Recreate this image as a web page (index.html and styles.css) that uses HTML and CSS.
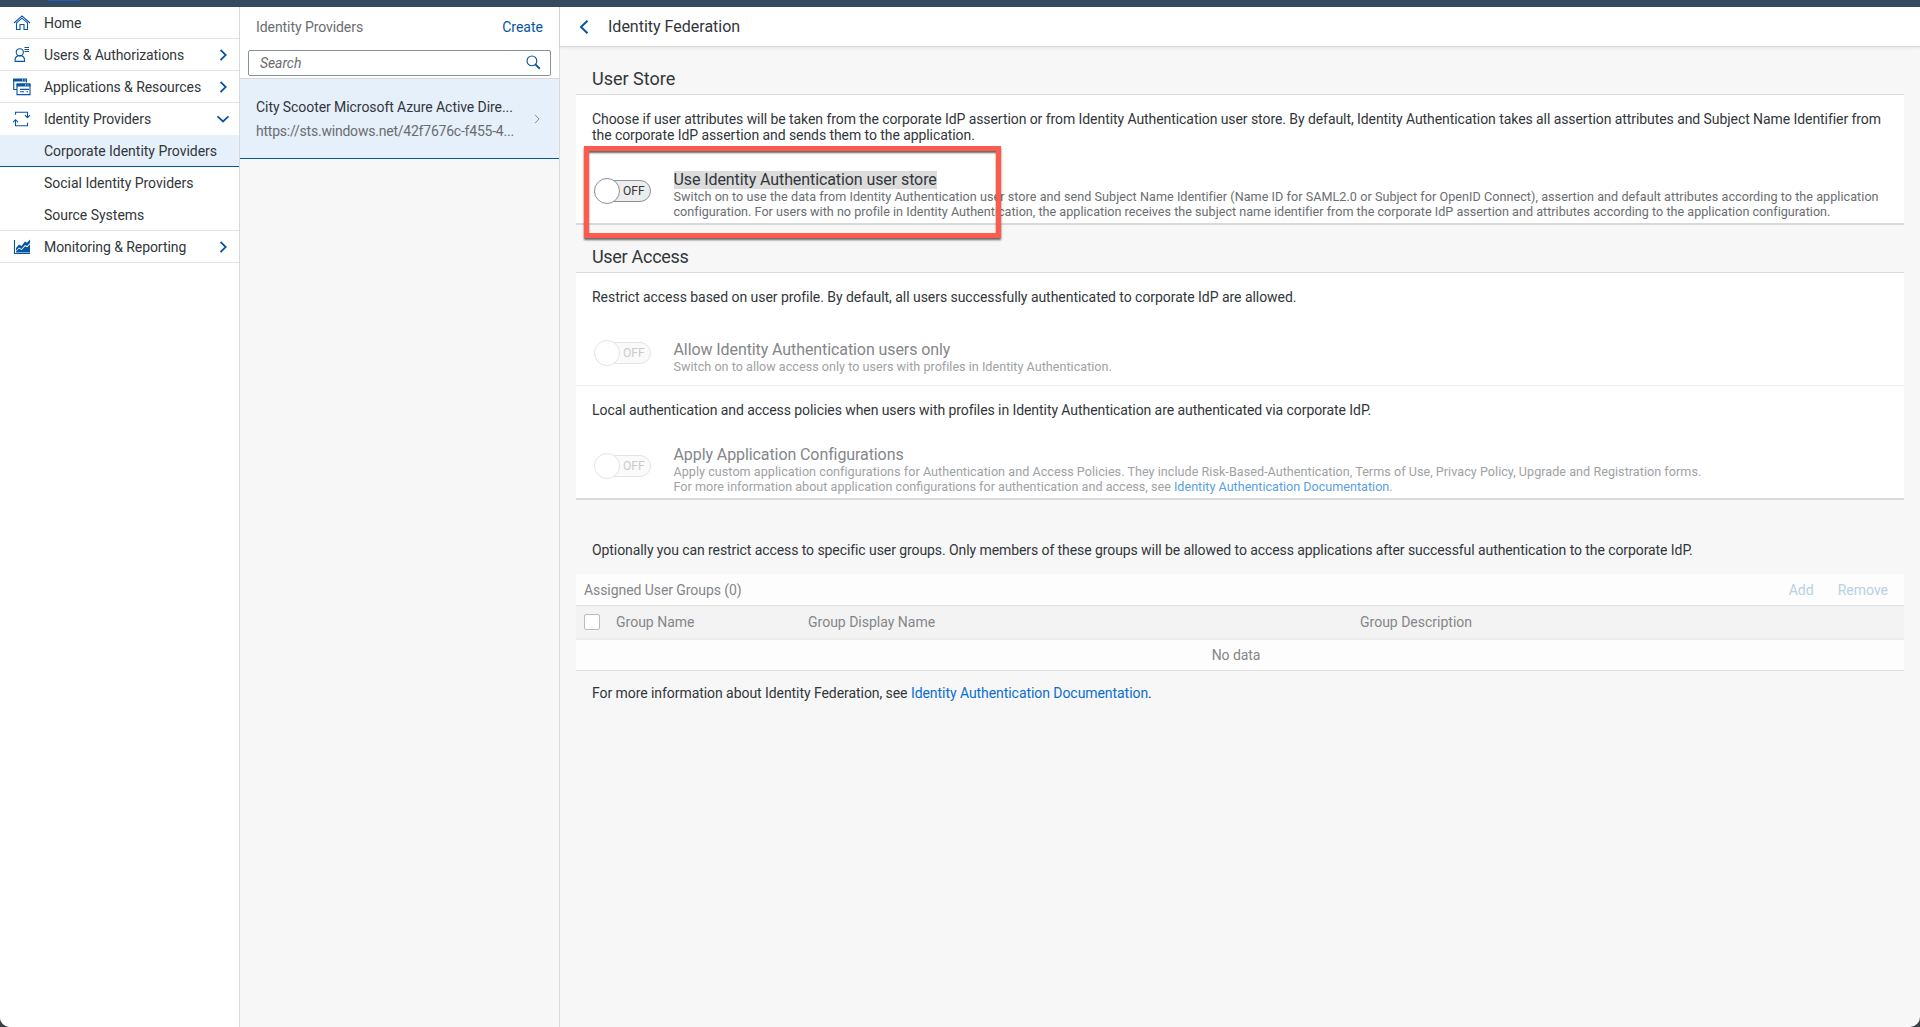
FILE: index.html
```html
<!DOCTYPE html>
<html lang="en">
<head>
<meta charset="utf-8">
<title>Identity Federation</title>
<link rel="stylesheet" href="styles.css">
</head>
<body>
<div class="window">
  <div class="shell"><span class="shell-tab"></span></div>
  <div class="columns">
    <nav class="side">
      <a class="nav-item"><svg class="ico" viewBox="0 0 18 18"><path d="M1 9 9 1.9 17 9M3.5 8.9V15.5H7V10.5H11V15.5H14.5V8.9L9 4.2z"/></svg><span>Home</span></a>
      <a class="nav-item"><svg class="ico" viewBox="0 0 18 18"><circle cx="6.8" cy="6.3" r="3.6"/><path d="M2.1 15.4V13.8Q2.1 11 5 9.8H8.8Q11.5 11 11.5 13.8V15.4zM11.5 1.5H16M11.5 3.5H16M11.5 5.5H16"/></svg><span class="w-users">Users &amp; Authorizations</span><svg class="chev" viewBox="0 0 12 12"><path d="M3.5 .8 8.7 6 3.5 11.2"/></svg></a>
      <a class="nav-item"><svg class="ico" viewBox="0 0 18 18"><path d="M3.5 11.5H.7V1.5H13.5V4.5M4 5.9V16.6H17V5.9M7 11.4H16M7 13.8H11M13.5 13.8H15"/><path class="fill" d="M.2.6H14V3.6H.2zM3.6 5.3H17.4V8.6H3.6z"/><path class="dots" d="M9 2H10M11.5 2H12.5M12 7H13M14.5 7H15.5"/></svg><span>Applications &amp; Resources</span><svg class="chev" viewBox="0 0 12 12"><path d="M3.5 .8 8.7 6 3.5 11.2"/></svg></a>
      <a class="nav-item open"><svg class="ico" viewBox="0 0 18 18"><path d="M2.5 4.7V2.2H14.5V7.5M12 5.2 14.5 7.7 17 5.2M2.5 10V15.7H14.5V12.7M0 12.2 2.5 9.7 5 12.2"/></svg><span>Identity Providers</span><svg class="chev" viewBox="0 0 12 12"><path d="M.5 3.3 6 8.5 11.5 3.3"/></svg></a>
      <a class="nav-item sub selected"><span>Corporate Identity Providers</span></a>
      <a class="nav-item sub"><span>Social Identity Providers</span></a>
      <a class="nav-item sub last"><span>Source Systems</span></a>
      <a class="nav-item"><svg class="ico" viewBox="0 0 18 18"><path d="M1.5 2V15.5H17"/><path class="fill" d="M3 10 6 6.5 8.5 8 12 3.5 14 4.8 17 1.5V5L14 8 12 7 8.5 11 6 9.5 3 12.7zM3 14.6V13.5L6 10.6 8.6 12 12.2 8.2 14.2 9.2 17 6.2V14.6z"/></svg><span>Monitoring &amp; Reporting</span><svg class="chev" viewBox="0 0 12 12"><path d="M3.5 .8 8.7 6 3.5 11.2"/></svg></a>
    </nav>

    <section class="list">
      <header class="list-head">
        <div class="list-title"><span>Identity Providers</span><a>Create</a></div>
        <div class="search"><span>Search</span><svg viewBox="0 0 16 16"><circle cx="6.3" cy="6.3" r="5.2"/><path d="M10 10 14.7 14.7"/></svg></div>
      </header>
      <div class="list-item">
        <div class="list-text"><span class="provider">City Scooter Microsoft Azure Active Dire...</span><span class="url">https://sts.windows.net/42f7676c-f455-4...</span></div>
        <svg viewBox="0 0 8 10"><path d="M2 .8 6 5 2 9.2"/></svg>
      </div>
    </section>

    <main class="detail">
      <header class="detail-head"><svg viewBox="0 0 10 14"><path d="M8.5 .8 2 7 8.5 13.2"/></svg><h1>Identity Federation</h1></header>
      <div class="content">
        <h2>User Store</h2>
        <div class="card store">
          <p class="intro">Choose if user attributes will be taken from the corporate IdP assertion or from Identity Authentication user store. By default, Identity Authentication takes all assertion attributes and Subject Name Identifier from<br>the corporate IdP assertion and sends them to the application.</p>
          <div class="option">
            <div class="switch"><span class="track">OFF</span><span class="knob"></span></div>
            <div class="option-text">
              <h3><mark>Use Identity Authentication user store</mark></h3>
              <p>Switch on to use the data from Identity Authentication user store and send Subject Name Identifier (Name ID for SAML2.0 or Subject for OpenID Connect), assertion and default attributes according to the application<br><span class="tight">configuration. For users with no profile in Identity Authentication, the application receives the subject name identifier from the corporate IdP assertion and attributes according to the application configuration.</span></p>
            </div>
          </div>
          <div class="highlight"></div>
        </div>

        <h2>User Access</h2>
        <div class="card access">
          <div class="block restrict">
            <p class="intro">Restrict access based on user profile. By default, all users successfully authenticated to corporate IdP are allowed.</p>
            <div class="option disabled">
              <div class="switch"><span class="track">OFF</span><span class="knob"></span></div>
              <div class="option-text"><h3>Allow Identity Authentication users only</h3><p class="tight">Switch on to allow access only to users with profiles in Identity Authentication.</p></div>
            </div>
          </div>
          <div class="block local">
            <p class="intro">Local authentication and access policies when users with profiles in Identity Authentication are authenticated via corporate IdP.</p>
            <div class="option disabled">
              <div class="switch"><span class="track">OFF</span><span class="knob"></span></div>
              <div class="option-text"><h3>Apply Application Configurations</h3><p>Apply custom application configurations for Authentication and Access Policies. They include Risk-Based-Authentication, Terms of Use, Privacy Policy, Upgrade and Registration forms.<br><span class="tight">For more information about application configurations for authentication and access, see <a>Identity Authentication Documentation</a>.</span></p></div>
            </div>
          </div>
        </div>

        <p class="note groups-note">Optionally you can restrict access to specific user groups. Only members of these groups will be allowed to access applications after successful authentication to the corporate IdP.</p>
        <div class="table">
          <div class="toolbar"><span>Assigned User Groups (0)</span><a>Add</a><a>Remove</a></div>
          <div class="thead"><span class="check"></span><span>Group Name</span><span>Group Display Name</span><span>Group Description</span></div>
          <div class="empty">No data</div>
        </div>
        <p class="note more">For more information about Identity Federation, see <a>Identity Authentication Documentation</a>.</p>
      </div>
    </main>
  </div>
</div>
</body>
</html>
```
FILE: styles.css
```css
* { box-sizing: border-box; }
body { margin: 0; background: #3c4045; font: 14px/16px Roboto, "Liberation Sans", sans-serif; color: #32363a; letter-spacing: -0.07px; }
h1, h2, h3, p { margin: 0; font-weight: 400; }
svg { fill: none; stroke: #0854a0; flex: none; }

.window { height: 1027px; display: flex; flex-direction: column; overflow: hidden; border-radius: 0 0 10px 10px; background: #f7f7f7; }
.shell { height: 7px; flex: none; background: #354a5f; padding-left: 48px; }
.shell-tab { display: block; width: 32px; height: 1px; background: #1b5fc1; }
.columns { flex: 1; display: flex; min-height: 0; }

.side { width: 240px; flex: none; background: #fff; border-right: 1px solid #d9d9d9; }
.nav-item { display: flex; align-items: center; height: 32px; padding: 1px 10px 0 13px; border-bottom: 1px solid #e4e4e4; white-space: nowrap; }
.nav-item span { flex: 1; margin-left: 13px; }
.nav-item .w-users { letter-spacing: -0.09px; }
.ico { width: 18px; height: 18px; stroke-width: 1.1; }
.ico .fill { fill: #0854a0; stroke: none; }
.ico .dots { stroke: #fff; }
.chev { width: 12px; height: 12px; stroke-width: 1.8; }
.nav-item.open, .nav-item.sub { border-bottom-color: transparent; }
.nav-item.sub { padding-left: 31px; letter-spacing: -0.02px; }
.nav-item.selected { background: #e5f0fa; border-bottom-color: #0854a0; }
.nav-item.last { border-bottom-color: #e4e4e4; }

.list { width: 320px; flex: none; border-right: 1px solid #d9d9d9; }
.list-head { height: 72px; background: #fff; border-bottom: 1px solid #d9d9d9; padding: 0 8px; }
.list-title { height: 43px; display: flex; justify-content: space-between; align-items: center; padding: 0 8px; color: #6a6d70; }
.list-title span { padding-bottom: 4px; }
.list-title a { color: #0854a0; padding-bottom: 4px; letter-spacing: 0; }
.search { height: 26px; width: 303px; border: 1px solid #89919a; border-radius: 2px; display: flex; align-items: center; justify-content: space-between; padding: 0 9px 0 11px; font-style: italic; color: #6a6d70; }
.search svg { width: 15px; height: 15px; stroke-width: 1.2; margin-bottom: 2px; }
.search path { stroke-width: 2; }
.list-item { height: 80px; background: #e5f0fa; border-bottom: 1px solid #0854a0; display: flex; align-items: center; justify-content: space-between; padding: 1px 18px 0 16px; }
.list-text { display: flex; flex-direction: column; gap: 8px; white-space: nowrap; }
.url { color: #6a6d70; letter-spacing: -0.22px; }
.list-item svg { width: 8px; height: 10px; stroke: #8a8d90; }

.detail { flex: 1; min-width: 0; }
.detail-head { height: 40px; background: #fff; border-bottom: 1px solid #d9d9d9; box-shadow: 0 1px 3px rgba(0,0,0,.08); display: flex; align-items: center; padding: 0 19px; gap: 19px; }
.detail-head svg { width: 10px; height: 14px; stroke-width: 2; }
h1 { font-size: 16px; letter-spacing: 0; }
.content { padding: 0 16px; }
h2 { font-size: 18px; line-height: 22px; letter-spacing: 0; padding: 21px 16px 4px; }
.card { background: #fff; border-top: 1px solid #d9d9d9; border-bottom: 2px solid #d9d9d9; white-space: nowrap; }
.store { height: 131px; padding-top: 16px; position: relative; }
.intro { padding-left: 16px; }
.option { display: flex; padding-left: 18px; }
.store .option { margin-top: 27px; }
.switch { width: 58px; height: 26px; margin: 8px 21.5px 0 0; display: flex; align-items: center; flex: none; }
.knob { order: 1; width: 26px; height: 26px; border-radius: 13px; border: 1px solid #89919a; background: #fff; z-index: 1; }
.track { order: 2; width: 44px; height: 22px; margin-left: -13px; border-radius: 0 11px 11px 0; border: 1px solid #89919a; background: #ededed; font-size: 12px; line-height: 20px; padding-left: 15px; letter-spacing: 0; }
.option-text { display: flex; flex-direction: column; }
h3 { font-size: 16px; line-height: 19px; letter-spacing: -0.09px; }
mark { display: inline-block; height: 18px; line-height: 18px; background: #dcdcdc; color: inherit; }
.option p { font-size: 12.6px; line-height: 15px; color: #6a6d70; letter-spacing: 0.05px; }
.option .tight { letter-spacing: 0.015px; }
.highlight { position: absolute; left: 8px; top: 51px; width: 417px; height: 92px; border: 5px solid #fe5b4c; box-shadow: 0 2px 2px rgba(0,0,0,.6), inset 0 2px 2px rgba(0,0,0,.6); }

.store + h2 { letter-spacing: -0.3px; }
.access { height: 228px; }
.block { padding-top: 16px; }
.restrict { height: 113px; border-bottom: 1px solid #ececec; }
.restrict .intro { letter-spacing: -0.045px; }
.restrict .option { margin-top: 35px; }
.restrict .switch { margin-top: 0; }
.local .option { margin-top: 27px; }
.disabled h3 { color: #84868a; }
.option.disabled p { color: #a0a2a4; }
.local .option p { letter-spacing: 0.035px; }
.local .option .tight { letter-spacing: 0; }
.disabled p a { color: #5a9fe0; }
.disabled .knob, .disabled .track { border-color: #e2e4e6; }
.disabled .track { background: #fafafa; color: #c8cacc; }

.note { padding-left: 16px; white-space: nowrap; }
.groups-note { margin-top: 42px; letter-spacing: -0.08px; }
.table { margin-top: 16px; color: #84868a; }
.toolbar { height: 32px; display: flex; align-items: center; gap: 24px; padding: 1px 16px 0 8px; background: #fdfdfd; border-bottom: 1px solid #e1e1e1; }
.toolbar span { flex: 1; }
.toolbar a { color: #b9d0e6; letter-spacing: 0; }
.thead { height: 34px; display: grid; grid-template-columns: 32px 192px 552px 1fr; align-items: center; padding-left: 8px; background: #f3f3f3; border-bottom: 2px solid #ebebeb; letter-spacing: 0; }
.check { width: 16px; height: 16px; border: 1px solid #b8bdc2; border-radius: 2px; background: #fff; }
.empty { height: 31px; background: #fdfdfd; border-bottom: 1px solid #e1e1e1; line-height: 30px; text-align: center; padding-right: 8px; }
.more { margin-top: 14px; letter-spacing: -0.06px; }
.more a { color: #0a6ed1; }
```
